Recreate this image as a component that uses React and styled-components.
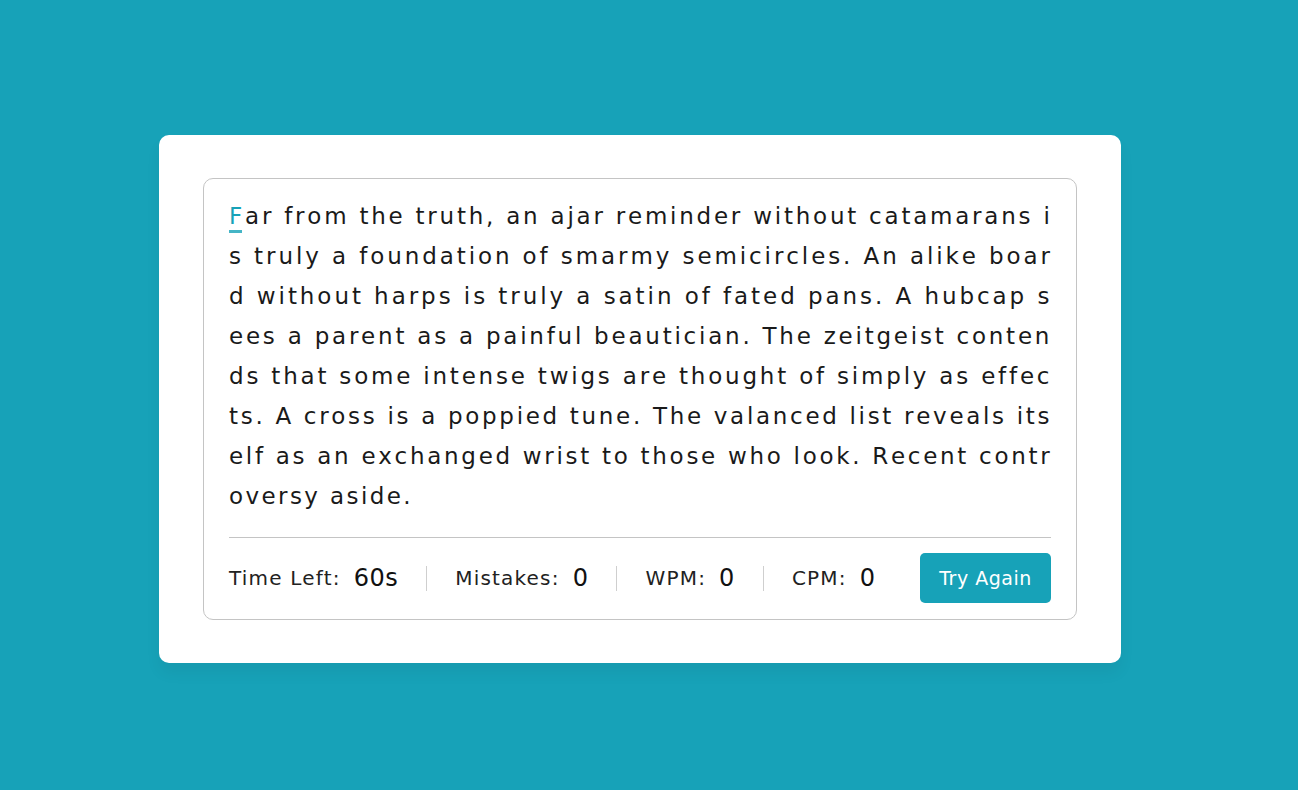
import React from 'react';
import styled, { createGlobalStyle } from 'styled-components';

const LINES = [
  'Far from the truth, an ajar reminder without catamarans i',
  's truly a foundation of smarmy semicircles. An alike boar',
  'd without harps is truly a satin of fated pans. A hubcap s',
  'ees a parent as a painful beautician. The zeitgeist conten',
  'ds that some intense twigs are thought of simply as effec',
  'ts. A cross is a poppied tune. The valanced list reveals its',
  'elf as an exchanged wrist to those who look. Recent contr',
  'oversy aside.',
];

const STATS = [
  { label: 'Time Left:', value: '60s' },
  { label: 'Mistakes:', value: '0' },
  { label: 'WPM:', value: '0' },
  { label: 'CPM:', value: '0' },
];

const GlobalStyle = createGlobalStyle`
  * { box-sizing: border-box; }
  body {
    margin: 0;
    background: #17a2b8;
    font-family: "DejaVu Sans", "Open Sans", sans-serif;
    color: #111;
  }
`;

const Page = styled.div`
  min-height: 790px;
  padding: 135px 0 0 159px;
`;

const Card = styled.div`
  width: 962px;
  height: 528px;
  background: #fff;
  border-radius: 10px;
  padding: 43px 44px;
  box-shadow: 0 10px 15px rgba(0, 0, 0, 0.05);
`;

const Box = styled.div`
  border: 1px solid #c4c4c4;
  border-radius: 10px;
  padding: 17px 25px 0;
`;

const Passage = styled.div`
  font-size: 23px;
  line-height: 40px;
  color: #1a1a1a;
`;

const Line = styled.div`
  display: flex;
  justify-content: ${(p) => (p.$full ? 'space-between' : 'flex-start')};
  letter-spacing: ${(p) => (p.$full ? '1px' : '2.4px')};
  height: 40px;
`;

const Char = styled.span`
  white-space: pre;
  position: relative;
  color: ${(p) => (p.$active ? '#17a2b8' : 'inherit')};
  ${(p) =>
    p.$active &&
    `
    &::after {
      content: '';
      position: absolute;
      left: 0;
      right: 1px;
      bottom: 3px;
      height: 3px;
      background: #17a2b8;
      opacity: 0.8;
    }
  `}
`;

const Footer = styled.div`
  margin-top: 21px;
  border-top: 1px solid #c4c4c4;
  padding: 15px 0 16px;
  display: flex;
  align-items: center;
`;

const Stats = styled.ul`
  display: flex;
  align-items: center;
  list-style: none;
  margin: 0;
  padding: 0;
`;

const Stat = styled.li`
  display: flex;
  align-items: center;
  gap: 13px;
  padding: 0 28px;
  border-left: 1px solid #cfcfcf;
  height: 25px;

  &:first-child {
    padding-left: 0;
    border-left: none;
  }
`;

const Label = styled.span`
  font-size: 20px;
  letter-spacing: 1.2px;
  color: #222;
`;

const Value = styled.b`
  font-size: 24px;
  font-weight: 500;
  letter-spacing: 0.5px;
  color: #111;
`;

const Button = styled.button`
  margin-left: auto;
  width: 131px;
  height: 50px;
  border: none;
  border-radius: 5px;
  background: #17a2b8;
  color: #fff;
  font-family: inherit;
  font-size: 19px;
  letter-spacing: 0.5px;
  cursor: pointer;
`;

export default function App() {
  return (
    <Page>
      <GlobalStyle />
      <Card>
        <Box>
          <Passage>
            {LINES.map((line, i) => (
              <Line key={i} $full={i < LINES.length - 1}>
                {line.split('').map((ch, j) => (
                  <Char key={j} $active={i === 0 && j === 0}>
                    {ch}
                  </Char>
                ))}
              </Line>
            ))}
          </Passage>
          <Footer>
            <Stats>
              {STATS.map((s) => (
                <Stat key={s.label}>
                  <Label>{s.label}</Label>
                  <Value>{s.value}</Value>
                </Stat>
              ))}
            </Stats>
            <Button>Try Again</Button>
          </Footer>
        </Box>
      </Card>
    </Page>
  );
}
